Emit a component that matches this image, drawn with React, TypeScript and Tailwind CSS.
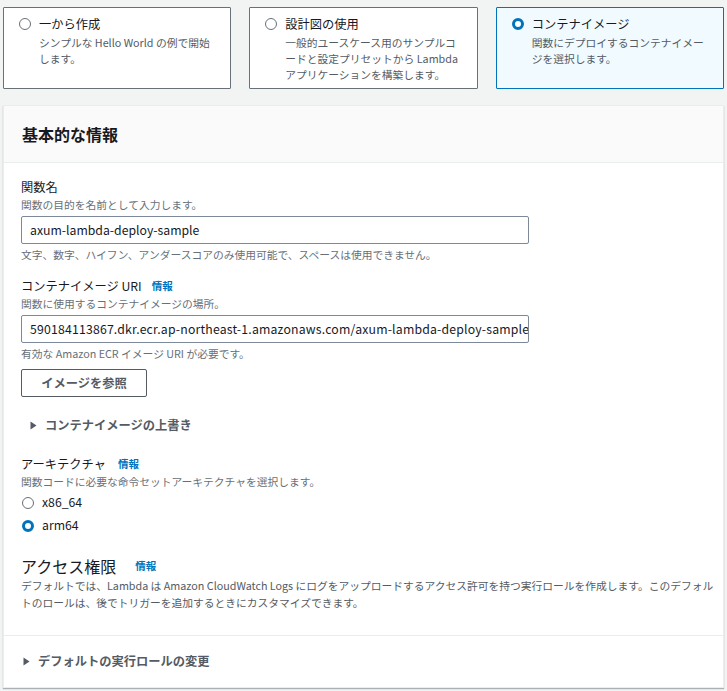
import { useState } from "react";

const FONT = "font-['Noto_Sans_CJK_JP','Noto_Sans',sans-serif]";

const sourceOptions = [
    { id: "scratch", title: "一から作成", desc: "シンプルな Hello World の例で開始します。" },
    { id: "blueprint", title: "設計図の使用", desc: "一般的ユースケース用のサンプルコードと設定プリセットから Lambda アプリケーションを構築します。" },
    { id: "container", title: "コンテナイメージ", desc: "関数にデプロイするコンテナイメージを選択します。" },
];

function Radio({ checked }: { checked: boolean }) {
    return checked ? (
        <span className="block w-[12px] h-[12px] rounded-full border-[3.5px] border-[#0073bb] bg-white shrink-0" />
    ) : (
        <span className="block w-[12px] h-[12px] rounded-full border-[1.5px] border-[#687078] bg-white shrink-0" />
    );
}

function Info() {
    return <span className="text-[10.5px] font-bold text-[#0073bb]">情報</span>;
}

function Caret() {
    return (
        <svg width="7" height="9" viewBox="0 0 7 9" className="shrink-0">
            <path d="M0.5 0.5 L6.5 4.5 L0.5 8.5 Z" fill="#545b64" />
        </svg>
    );
}

export default function App() {
    const [source, setSource] = useState("container");
    const [arch, setArch] = useState("arm64");

    return (
        <div className={`${FONT} bg-[#f2f3f3] min-h-[691px] w-[727px] px-[3px] pt-[7px] text-[#16191f]`}>
            <div className="grid grid-cols-3 gap-x-[18px]">
                {sourceOptions.map((o) => {
                    const on = source === o.id;
                    return (
                        <div
                            key={o.id}
                            onClick={() => setSource(o.id)}
                            className={`h-[82px] border rounded-[1px] pl-[15px] pt-[6px] cursor-pointer ${
                                on ? "border-[#0073bb] bg-[#f1faff]" : "border-[#687078] bg-white"
                            }`}
                        >
                            <div className="flex items-start gap-[8px]">
                                <div className="pt-[4px]">
                                    <Radio checked={on} />
                                </div>
                                <div className="w-[174px]">
                                    <div className="text-[12.25px] leading-[20px]">{o.title}</div>
                                    <div className="mt-[1px] text-[10.75px] leading-[16px] text-[#545b64] [line-break:anywhere]">{o.desc}</div>
                                </div>
                            </div>
                        </div>
                    );
                })}
            </div>

            <div className="mt-[16px] bg-white border border-[#eaeded] shadow-[0_1px_1px_0_rgba(0,28,36,0.3)]">
                <div className="h-[57px] bg-[#fafafa] border-b border-[#eaeded] flex items-center px-[18px]">
                    <h2 className="text-[16px] font-bold leading-[22px]">基本的な情報</h2>
                </div>

                <div className="pl-[17px] pr-[5px] pt-[14px]">
                    <div className="text-[12.25px] leading-[20px]">関数名</div>
                    <div className="text-[10.75px] leading-[16px] text-[#687078]">関数の目的を名前として入力します。</div>
                    <div className="mt-[3px] w-[508px] h-[28px] border border-[#7d8998] rounded-[2px] px-[8px] flex items-center text-[12.25px] overflow-hidden whitespace-nowrap">
                        axum-lambda-deploy-sample
                    </div>
                    <div className="mt-[3px] text-[10.75px] leading-[16px] text-[#687078]">
                        文字、数字、ハイフン、アンダースコアのみ使用可能で、スペースは使用できません。
                    </div>

                    <div className="mt-[13px] flex items-center gap-[10px] text-[12.25px] leading-[20px]">
                        <span>コンテナイメージ URI</span>
                        <Info />
                    </div>
                    <div className="text-[10.75px] leading-[16px] text-[#687078]">関数に使用するコンテナイメージの場所。</div>
                    <div className="mt-[3px] w-[508px] h-[28px] border border-[#7d8998] rounded-[2px] pl-[8px] flex items-center text-[12.25px] tracking-[0.19px] overflow-hidden whitespace-nowrap">
                        590184113867.dkr.ecr.ap-northeast-1.amazonaws.com/axum-lambda-deploy-sample:latest
                    </div>
                    <div className="mt-[3px] text-[10.75px] leading-[16px] text-[#687078]">有効な Amazon ECR イメージ URI が必要です。</div>
                    <button className="mt-[7px] w-[126px] h-[28px] border border-[#545b64] rounded-[2px] text-[12.25px] font-bold text-[#545b64] bg-white">
                        イメージを参照
                    </button>

                    <div className="mt-[18px] flex items-center gap-[8px] text-[12.25px] leading-[20px] font-bold text-[#545b64] pl-[9px]">
                        <Caret />
                        <span>コンテナイメージの上書き</span>
                    </div>

                    <div className="mt-[19px] flex items-center gap-[12px] text-[12.25px] leading-[20px]">
                        <span>アーキテクチャ</span>
                        <Info />
                    </div>
                    <div className="text-[10.75px] leading-[16px] text-[#687078]">関数コードに必要な命令セットアーキテクチャを選択します。</div>
                    <div className="mt-[4px] flex flex-col gap-[6px]">
                        {["x86_64", "arm64"].map((a) => (
                            <label key={a} className="flex items-center gap-[8px] h-[17px] pl-[1px] cursor-pointer" onClick={() => setArch(a)}>
                                <Radio checked={arch === a} />
                                <span className="text-[12.25px]">{a}</span>
                            </label>
                        ))}
                    </div>

                    <div className="mt-[21px] flex items-center gap-[19px]">
                        <span className="text-[16px] leading-[22px]">アクセス権限</span>
                        <Info />
                    </div>
                    <p className="text-[10.75px] leading-[17px] text-[#545b64] pb-[24px]">
                        デフォルトでは、Lambda は Amazon CloudWatch Logs にログをアップロードするアクセス許可を持つ実行ロールを作成します。このデフォルトのロールは、後でトリガーを追加するときにカスタマイズできます。
                    </p>
                </div>

                <div className="border-t border-[#eaeded] h-[52px] px-[19px] flex items-center gap-[8px] text-[12.25px] font-bold text-[#545b64]">
                    <Caret />
                    <span>デフォルトの実行ロールの変更</span>
                </div>
            </div>
        </div>
    );
}
